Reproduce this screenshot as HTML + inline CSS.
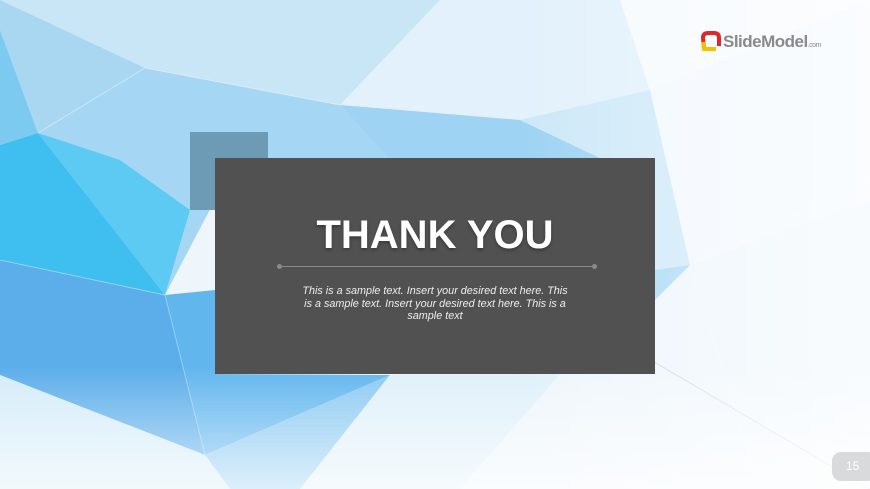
<!DOCTYPE html>
<html><head><meta charset="utf-8"><style>
html,body{margin:0;padding:0;width:870px;height:489px;overflow:hidden;background:#eef6fc;}
.wrap{position:relative;width:870px;height:489px;}
svg.bg{position:absolute;left:0;top:0;}
.sq{position:absolute;left:190px;top:132px;width:78px;height:78px;background:#6d9bb6;}
.box{position:absolute;left:215px;top:158px;width:440px;height:216px;background:#515151;}
.title{position:absolute;left:0;width:440px;top:55px;text-align:center;font:bold 40px "Liberation Sans",sans-serif;color:#fff;text-shadow:0 2px 3px rgba(0,0,0,.3);}
.line{position:absolute;left:64px;top:108px;width:315px;height:1px;background:#8a8a8a;}
.dot{position:absolute;top:106px;width:5px;height:5px;border-radius:50%;background:#8a8a8a;}
.txt{position:absolute;left:82px;width:276px;top:127px;text-align:center;font:italic 10.8px/12.5px "Liberation Sans",sans-serif;color:#eee;}
.pg{position:absolute;left:832px;top:452px;width:44px;height:29px;border-radius:9px;background:#d8dadc;color:#fff;font:12px "Liberation Sans",sans-serif;line-height:29px;padding-left:14px;box-sizing:border-box;}
.logo{position:absolute;left:700px;top:30px;font:bold 17px "Liberation Sans",sans-serif;color:#8a8a8a;letter-spacing:-0.5px;}
</style></head><body><div class="wrap">
<svg class="bg" width="870" height="489" viewBox="0 0 870 489">
<defs>
<linearGradient id="wb" x1="0" y1="0" x2="0" y2="1"><stop offset="0.75" stop-color="#fff" stop-opacity="0"/><stop offset="1" stop-color="#fff" stop-opacity="0.7"/></linearGradient>
<linearGradient id="wr" x1="0" y1="0" x2="1" y2="0"><stop offset="0.6" stop-color="#fff" stop-opacity="0"/><stop offset="1" stop-color="#fff" stop-opacity="0.6"/></linearGradient>
</defs>
<rect width="870" height="489" fill="#eef6fc"/>
<polygon points="0,0 440,0 340,105 145,68" fill="#c9e6f7"/>
<polygon points="440,0 620,0 650,90 520,120 340,105" fill="#e2f1fb"/>
<polygon points="0,0 145,68 38,133 0,30" fill="#a9d7f2"/>
<polygon points="145,68 340,105 390,160 215,200 165,295 38,133" fill="#a5d6f3"/>
<polygon points="340,105 520,120 600,158 390,160" fill="#9ed3f3"/>
<polygon points="520,120 650,90 690,265 655,300 600,158" fill="#cde8f8"/>
<polygon points="0,30 38,133 0,145" fill="#7ccaf0"/>
<polygon points="0,145 38,133 165,295 0,260" fill="#3ebff0"/>
<polygon points="38,133 165,295 190,210 120,160" fill="#5ccaf2"/>
<polygon points="0,260 165,295 215,355 205,455 0,375" fill="#5caeea"/>
<polygon points="165,295 215,290 215,374 390,375 205,455" fill="#62b6ee"/>
<polygon points="205,455 390,375 300,489 230,489" fill="#8ccaf2"/>
<polygon points="0,375 205,455 230,489 0,489" fill="#d5ecf9"/>
<polygon points="655,270 690,265 655,300" fill="#a8d9f4"/>
<polygon points="390,375 560,374 460,489 300,489" fill="#dff0fa"/>
<polygon points="650,90 870,0 870,200 690,265" fill="#f2f8fd"/>
<polygon points="620,0 870,0 650,90" fill="#f6fafd"/>
<g stroke="#ffffff" stroke-opacity=".35" stroke-width="1" fill="none">
<line x1="38" y1="133" x2="145" y2="68"/><line x1="145" y1="68" x2="340" y2="105"/>
<line x1="165" y1="295" x2="205" y2="455"/><line x1="0" y1="260" x2="165" y2="295"/>
<line x1="690" y1="265" x2="870" y2="180"/><line x1="690" y1="265" x2="760" y2="489"/>
</g>
<line x1="600" y1="330" x2="870" y2="489" stroke="#c9d7e2" stroke-width="1"/>
<rect width="870" height="489" fill="url(#wb)"/>
<rect width="870" height="489" fill="url(#wr)"/>
</svg>
<div class="sq"></div>
<div class="box">
<div class="title">THANK YOU</div>
<div class="line"></div>
<div class="dot" style="left:62px"></div><div class="dot" style="left:377px"></div>
<div class="txt">This is a sample text. Insert your desired text here. This is a sample text. Insert your desired text here. This is a sample text</div>
</div>
<div class="logo"><svg width="22" height="22" viewBox="0 0 22 22" style="vertical-align:-5px;margin-right:1px"><path d="M4 19 L3 8 Q3 3 8 3 L14 3 Q19 3 19 8 L19 16" stroke="#e0262b" stroke-width="4" fill="none"/><path d="M3 12 L4 19 L16 19" stroke="#f2c200" stroke-width="4" fill="none"/></svg>SlideModel<span style="font-size:7px;font-weight:normal">.com</span></div>
<div class="pg">15</div>
</div></body></html>
